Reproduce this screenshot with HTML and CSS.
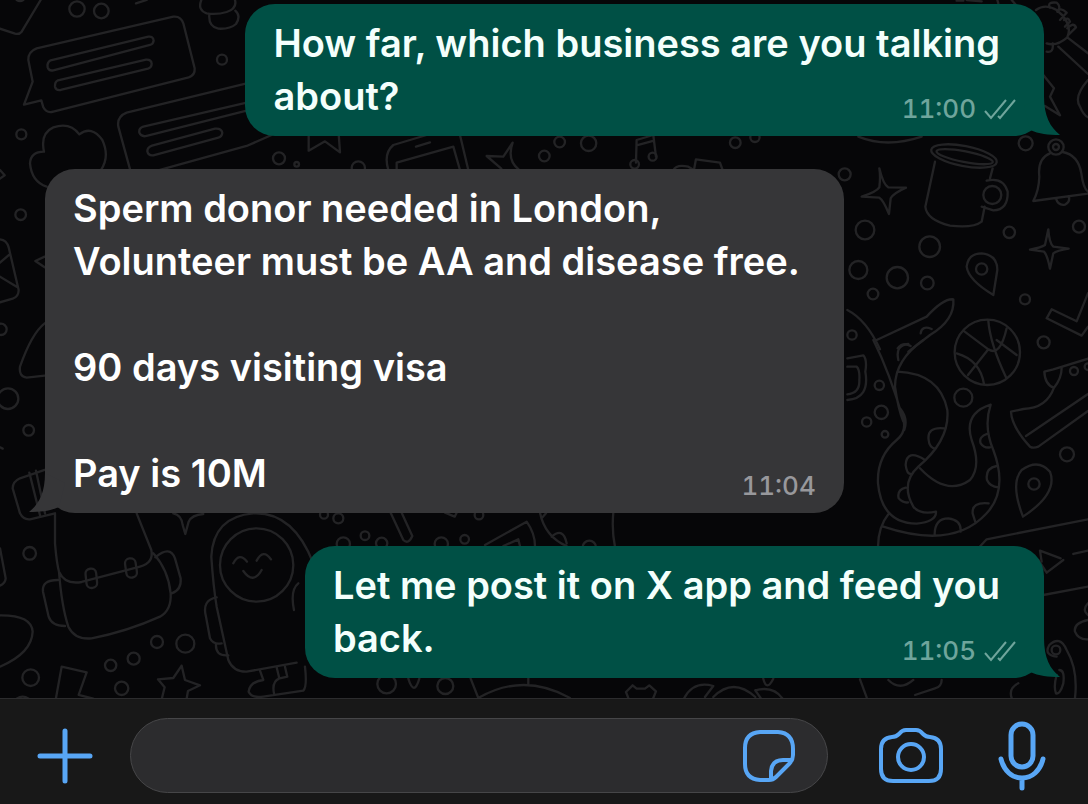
FILE: index.html
```html
<!DOCTYPE html>
<html lang="en">
<head>
    <meta charset="UTF-8">
    <meta name="viewport" content="width=device-width, initial-scale=1.0">
    <title>Chat</title>
    <link rel="stylesheet" href="styles.css">
</head>
<body>
    <main class="chat">
        <svg class="wallpaper" viewBox="0 0 1088 698" preserveAspectRatio="xMidYMid slice" aria-hidden="true">
            <!-- speech bubbles, cloud -->
            <g transform="scale(.3333)">
                <path d="M122 0L65 95Q58 104 45 101L0 86M50 0Q60 6 70 0M408 10L440 0"/>
                <circle cx="231" cy="27" r="23"/><circle cx="304" cy="33" r="22"/>
                <path d="M110 145L520 50Q542 47 550 70L584 205Q586 225 566 232L160 335Q140 341 130 322L124 301L72 314L98 245L85 180Q84 155 110 145Z"/>
                <path d="M152 181L445 110Q460 108 461 122Q460 132 450 135L160 211Q147 214 143 202Q140 188 152 181Z"/>
                <path d="M174 241L438 179Q454 178 455 191Q455 202 444 206L182 270Q168 272 165 260Q164 246 174 241Z"/>
                <path d="M604 0Q592 30 620 40Q650 45 680 36Q712 25 705 0M628 44Q625 80 655 86Q690 88 708 72Q724 48 706 32"/>
                <circle cx="666" cy="179" r="15"/><circle cx="64" cy="403" r="15"/>
                <path d="M740 250L380 338Q350 350 355 380L392 515M740 308L430 380Q416 384 418 398Q424 412 440 408L740 332M456 437L645 386Q664 384 667 398Q666 410 655 413L460 466Q445 468 442 454Q442 442 456 437ZM480 510L740 438L815 405"/>
                <path d="M140 560Q95 545 90 490Q92 455 132 455Q120 400 160 382Q210 365 238 403Q275 375 307 420Q330 470 303 510M0 510L14 526L0 536"/>
            </g>
            <!-- left edge -->
            <g transform="translate(0 160) scale(.3333)">
                <circle cx="62" cy="164" r="16"/><circle cx="3" cy="508" r="17"/><circle cx="24" cy="716" r="31"/><circle cx="86" cy="811" r="16"/>
                <path d="M0 238Q20 240 26 262L56 390Q56 410 38 416L0 427M0 308L28 284M0 350L50 380M134 290L106 303L134 322M134 490Q95 520 60 620Q56 650 80 653L134 647M134 930L60 955Q38 965 38 985L60 1060Q70 1080 90 1078L165 1060M88 938L120 1066M108 932L135 1060M0 862L8 866"/>
            </g>
            <!-- backpack, penguin, star -->
            <g transform="translate(0 500) scale(.3333)">
                <path d="M165 42V130Q170 190 177 215Q195 255 245 246L420 200Q462 188 454 150L410 40M177 215Q185 320 205 380Q225 420 275 415Q380 395 480 350Q515 330 512 280Q505 210 460 160M173 240Q125 240 129 275L146 350Q155 378 195 378M466 172Q510 135 525 175L542 235Q545 270 515 280"/>
                <rect x="258" y="206" width="32" height="58" rx="15" transform="rotate(-6 274 235)"/><rect x="377" y="175" width="32" height="58" rx="15" transform="rotate(-8 393 204)"/>
                <circle cx="89" cy="160" r="19"/><circle cx="471" cy="426" r="18"/><circle cx="556" cy="431" r="27"/><circle cx="401" cy="476" r="18"/><circle cx="332" cy="496" r="17"/><circle cx="92" cy="533" r="25"/><circle cx="365" cy="565" r="20"/>
                <path d="M0 145L17 235Q16 250 0 257M0 346Q95 345 98 395Q95 460 0 500M50 596Q68 584 86 596M520 40Q545 45 548 75L556 102L566 65Q575 45 610 42M168 594L185 500L260 517L236 585L280 596M545 497L555 540L600 556L564 573L560 596M545 497L520 534L474 538L494 562L486 594"/>
                <path d="M940 190Q880 35 760 40Q640 50 634 170Q640 260 650 320L685 480Q700 516 740 515L890 488M650 292Q605 300 618 350L630 415Q640 435 665 430M648 430Q645 470 685 466M895 250Q870 270 882 330"/>
                <circle cx="770" cy="195" r="110"/>
                <path d="M700 190Q718 155 741 185M770 182Q790 145 813 178M730 213Q760 255 785 210M780 512L790 540Q750 545 746 575Q755 595 790 590L910 572Q922 560 915 500M830 502L838 535Q815 545 822 580M855 500L862 530L836 536"/>
            </g>
            <!-- between the bubbles -->
            <g transform="translate(240 120) scale(.3333)">
                <path d="M206 40V92L255 64L300 97L296 40M445 150Q430 100 460 75L560 45M470 150V128L640 80L660 150M660 45L685 150M528 80L570 67M818 68L790 110L740 108L784 146M818 68Q800 120 836 148M1188 128L1190 60L1240 45L1248 110M1190 76L1242 62M1300 150Q1310 132 1345 140L1362 150L1368 118L1440 128L1448 150"/>
                <circle cx="117" cy="115" r="18"/><circle cx="170" cy="133" r="7"/><circle cx="355" cy="144" r="20"/><circle cx="913" cy="108" r="16"/><circle cx="959" cy="66" r="16"/><circle cx="1046" cy="70" r="23"/><circle cx="1184" cy="133" r="13"/><circle cx="1238" cy="110" r="12"/><circle cx="1486" cy="68" r="16"/><circle cx="1545" cy="52" r="14"/>
            </g>
            <g transform="translate(300 500) scale(.3333)">
                <path d="M272 38L310 120Q325 135 337 108L305 38M435 38L464 50L470 38M555 135L680 65Q705 100 705 138M610 138L655 118L660 138M720 38Q735 110 800 138M755 110Q790 80 800 130M940 38Q935 90 945 140M725 55L738 40"/>
                <circle cx="72" cy="44" r="12"/><circle cx="115" cy="55" r="15"/><circle cx="195" cy="107" r="13"/><circle cx="130" cy="132" r="20"/><circle cx="245" cy="130" r="17"/><circle cx="424" cy="132" r="20"/><circle cx="494" cy="118" r="13"/><circle cx="537" cy="45" r="13"/><circle cx="868" cy="142" r="20"/>
            </g>
            <!-- mug, bell, pins -->
            <g transform="translate(840 130) scale(.3333)">
                <path d="M55 20Q140 55 245 20M118 115Q130 165 145 172L198 173Q160 190 152 205L147 252Q130 210 118 203L65 200Q110 185 118 172Q122 140 118 115ZM625 298Q628 340 640 350L686 356Q650 362 640 370L630 416Q622 375 612 365L570 359Q605 352 615 345Z"/>
                <ellipse cx="372" cy="78" rx="100" ry="30" transform="rotate(11 372 78)"/><ellipse cx="374" cy="80" rx="86" ry="16" transform="rotate(11 374 80)"/>
                <path d="M285 95L256 230Q260 270 330 287Q400 295 425 275L434 230M458 115L450 145M440 152Q490 140 503 185Q505 240 460 241L425 230"/>
                <circle cx="457" cy="195" r="27"/><circle cx="557" cy="40" r="21"/><circle cx="648" cy="51" r="23"/><circle cx="648" cy="51" r="9"/>
                <path d="M630 70Q592 85 598 140Q597 180 580 213L744 191M668 66Q715 75 724 130Q730 175 744 185M648 206Q655 228 675 224Q692 215 686 199"/>
                <circle cx="14" cy="133" r="18"/><circle cx="75" cy="300" r="28"/><circle cx="269" cy="350" r="31"/><circle cx="55" cy="420" r="27"/><circle cx="172" cy="443" r="32"/><circle cx="262" cy="459" r="19"/><circle cx="99" cy="492" r="16"/><circle cx="508" cy="307" r="17"/><circle cx="717" cy="290" r="18"/><circle cx="555" cy="508" r="15"/><circle cx="611" cy="637" r="18"/><circle cx="36" cy="615" r="14"/>
                <path d="M460 495Q385 450 380 410Q385 370 425 370Q472 375 472 420ZM744 490L710 574L635 538L620 565L725 617L744 590"/>
                <circle cx="425" cy="417" r="17"/>
                <path d="M22 540Q80 570 120 658M110 630L260 560Q310 505 340 508Q345 570 270 615L205 665M242 610Q245 585 275 597M173 655Q190 635 212 648"/>
            </g>
            <!-- tentacle, ball, boot -->
            <g transform="translate(840 340) scale(.3333)">
                <circle cx="442" cy="37" r="98"/>
                <path d="M370 -28L445 28Q480 52 500 -35M445 -58Q450 10 498 112M470 0L530 45M445 28L384 105M350 40Q420 60 432 132"/>
                <path d="M22 55L70 46Q82 60 76 95Q90 175 22 180M22 80H50Q60 90 58 120Q60 160 22 163M100 0Q150 100 190 240Q200 275 170 300Q110 350 114 430Q125 550 230 551Q290 545 288 515Q240 525 220 500Q180 430 235 380Q330 300 322 210Q300 100 172 95M250 0Q165 60 165 140Q175 210 190 245M180 205Q205 235 193 270M205 12Q165 15 175 60M312 265Q260 260 266 300Q268 322 285 326M255 360Q200 325 197 375Q200 402 212 402M197 443Q170 450 176 475Q190 490 204 487M240 385Q320 470 390 420Q425 380 395 300Q370 220 452 194Q430 260 460 330Q505 450 440 520Q340 630 130 560M443 281Q415 290 422 310Q432 325 450 322M470 378Q435 385 441 420Q450 440 475 442M446 490Q395 485 398 520L406 546M284 582Q285 535 325 535Q365 540 362 575M145 523Q115 560 114 620"/>
                <circle cx="370" cy="173" r="27"/><circle cx="118" cy="136" r="14"/><circle cx="124" cy="217" r="20"/><circle cx="80" cy="246" r="14"/><circle cx="135" cy="283" r="10"/><circle cx="681" cy="343" r="21"/><circle cx="702" cy="93" r="12"/><circle cx="744" cy="80" r="10"/><circle cx="582" cy="432" r="17"/>
                <path d="M744 56L640 88L613 95Q615 135 642 143Q665 115 665 84M642 143Q620 205 550 207L513 215Q515 260 570 320Q580 326 595 320L744 213M558 288L744 162M549 530Q510 430 545 390Q595 355 630 395Q655 460 549 530ZM744 538L440 598L415 625M600 632L605 665M600 632L662 655M700 642L744 632"/>
            </g>
            <!-- top and bottom right -->
            <g transform="translate(860 0) scale(.3333)">
                <path d="M290 2H310M320 0L365 4M412 0L415 10M455 0L468 15M528 30Q555 10 590 30Q640 70 622 112Q590 140 560 130M560 155Q582 160 578 130M622 112L684 160M595 140L684 222M684 240Q640 290 660 320Q670 345 684 352M550 225L582 265L570 290L600 346L555 318M570 23Q560 5 590 8Q605 20 592 35M592 35Q600 20 620 38L600 60M612 60Q625 50 630 65L615 80M622 85Q640 65 648 82L625 105"/>
            </g>
            <g transform="translate(860 560) scale(.3333)">
                <path d="M535 0L560 38L610 0M550 105L684 80M684 130Q665 150 684 165M684 180Q640 190 645 215Q655 240 684 238M590 290Q550 285 568 255Q600 225 620 270Q655 330 645 414M598 330Q615 330 610 370Q600 405 588 400Q580 380 590 345M0 358L20 412M85 360Q120 395 160 360M245 360Q245 380 225 385L165 405M475 370Q445 385 455 414"/>
                <circle cx="588" cy="270" r="13"/>
            </g>
            <g transform="translate(290 672) scale(.3333)">
                <path d="M542 20L565 78Q700 0 840 78M715 15V36M1015 78L1008 60L1028 40L1040 50H1065L1078 40L1098 58L1090 78M1182 80Q1210 25 1270 42L1245 75M1270 75Q1330 15 1396 75M1396 55Q1450 40 1478 80M1396 55L1412 78M1420 20Q1430 60 1450 20M355 20Q372 75 388 20"/>
                <circle cx="290" cy="36" r="28"/><circle cx="466" cy="42" r="24"/>
            </g>
        </svg>

        <article class="message out">
            <p class="text">How far, which business are you talking<br>about?</p>
            <span class="meta">
                <time>11:00</time>
                <svg class="ticks" viewBox="0 0 32 22" aria-label="Delivered"><path d="M1 13L7 20L22 2M14 18L16 20L31 2"/></svg>
            </span>
            <svg class="tail" viewBox="0 0 46 40" aria-hidden="true"><path d="M30 0C30 20 36 31 46 39C34 39 25 38 16 34L10 10Z"/></svg>
        </article>

        <article class="message in">
            <p class="text">Sperm donor needed in London,<br>Volunteer must be AA and disease free.<br><br>90 days visiting visa<br><br>Pay is 10M</p>
            <span class="meta"><time>11:04</time></span>
            <svg class="tail" viewBox="0 0 46 40" aria-hidden="true"><path d="M30 0C30 20 36 31 46 39C34 39 25 38 16 34L10 10Z"/></svg>
        </article>

        <article class="message out">
            <p class="text">Let me post it on X app and feed you<br>back.</p>
            <span class="meta">
                <time>11:05</time>
                <svg class="ticks" viewBox="0 0 32 22" aria-label="Delivered"><path d="M1 13L7 20L22 2M14 18L16 20L31 2"/></svg>
            </span>
            <svg class="tail" viewBox="0 0 46 40" aria-hidden="true"><path d="M30 0C30 20 36 31 46 39C34 39 25 38 16 34L10 10Z"/></svg>
        </article>
    </main>

    <form class="composer">
        <button class="icon-btn" type="button" aria-label="Attach">
            <svg width="58" height="58" viewBox="0 0 58 58"><path d="M29 4V54M4 29H54"/></svg>
        </button>
        <div class="field">
            <input class="field-input" type="text" aria-label="Message">
            <button class="icon-btn" type="button" aria-label="Stickers">
                <svg class="thin" width="54" height="54" viewBox="0 0 54 54"><path d="M18 3H36Q51 4 51 20V26Q51 31 47 35L34 48Q31 51 27 51H18Q3 50 3 35V19Q3 4 18 3ZM29 50V42Q30 31 41 31H50"/></svg>
            </button>
        </div>
        <button class="icon-btn camera" type="button" aria-label="Camera">
            <svg class="thin" width="64" height="56" viewBox="0 0 64 56"><path d="M13 9Q17 9 20 6Q23 2 27 2H37Q41 2 44 6Q47 9 51 9Q62 10 62 21V41Q62 53 50 53H14Q2 53 2 41V21Q2 10 13 9Z"/><circle cx="32" cy="29" r="13"/></svg>
        </button>
        <button class="icon-btn mic" type="button" aria-label="Voice message">
            <svg width="48" height="70" viewBox="0 0 48 70"><rect x="13" y="3" width="22" height="43" rx="11"/><path d="M3 38C6 50 14 57 24 57S42 50 45 38M24 57V67"/></svg>
        </button>
    </form>
</body>
</html>
```
FILE: styles.css
```css
html, body {
    height: 100%;
    margin: 0;
    padding: 0;
}
body {
    display: flex;
    flex-direction: column;
    background-color: #060608;
    color: #ffffff;
    font-family: Inter, "Liberation Sans", sans-serif;
}

/* messages */
.chat {
    position: relative;
    flex: 1;
    display: flex;
    flex-direction: column;
    gap: 33px;
    padding: 4px 44px 20px 45px;
    overflow: hidden;
}
.wallpaper {
    position: absolute;
    top: 0;
    left: 0;
    width: 100%;
    height: 100%;
    fill: none;
    stroke: #232325;
    stroke-width: 7;
    stroke-linecap: round;
    stroke-linejoin: round;
}
.message {
    position: relative;
    padding: 13px 44px 13px 28px;
    border-radius: 30px;
}
.message.out {
    align-self: flex-end;
    background-color: #005045;
    color: #f4fffc;
}
.message.in {
    align-self: flex-start;
    background-color: #363638;
}
.text {
    margin: 0;
    font-size: 38px;
    font-weight: 600;
    line-height: 53px;
}
.meta {
    position: absolute;
    right: 28px;
    bottom: 12px;
    display: flex;
    align-items: center;
    gap: 8px;
    color: #6fa59c;
    font-size: 26px;
    font-weight: 500;
    line-height: 30px;
    font-variant-numeric: tabular-nums;
}
.in .meta {
    color: #98989c;
}
.ticks {
    width: 32px;
    height: 22px;
    fill: none;
    stroke: currentColor;
    stroke-width: 2;
}
.tail {
    position: absolute;
    bottom: 0;
    width: 46px;
    height: 40px;
}
.out .tail {
    right: -16px;
    fill: #005045;
}
.in .tail {
    left: -16px;
    fill: #363638;
    transform: scaleX(-1);
}

/* bottom bar */
.composer {
    display: flex;
    align-items: center;
    padding: 19px 42px 11px 36px;
    border-top: 1px solid #2c2c2e;
    background-color: #181818;
}
.field {
    flex: 1;
    display: flex;
    align-items: center;
    min-width: 0;
    height: 73px;
    margin-left: 36px;
    padding: 0 31px 0 32px;
    border: 1px solid #464648;
    border-radius: 38px;
    background-color: #2c2c2e;
}
.field-input {
    flex: 1;
    min-width: 0;
    padding: 0;
    border: none;
    outline: none;
    background: none;
    color: #ffffff;
    font: inherit;
    font-size: 38px;
}
.icon-btn {
    display: flex;
    padding: 0;
    border: none;
    background: none;
    cursor: pointer;
}
.icon-btn svg {
    fill: none;
    stroke: #58a6f5;
    stroke-width: 5;
    stroke-linecap: round;
    stroke-linejoin: round;
}
.icon-btn .thin {
    stroke-width: 4;
}
.camera {
    margin-left: 51px;
}
.mic {
    margin-left: 55px;
}
```
